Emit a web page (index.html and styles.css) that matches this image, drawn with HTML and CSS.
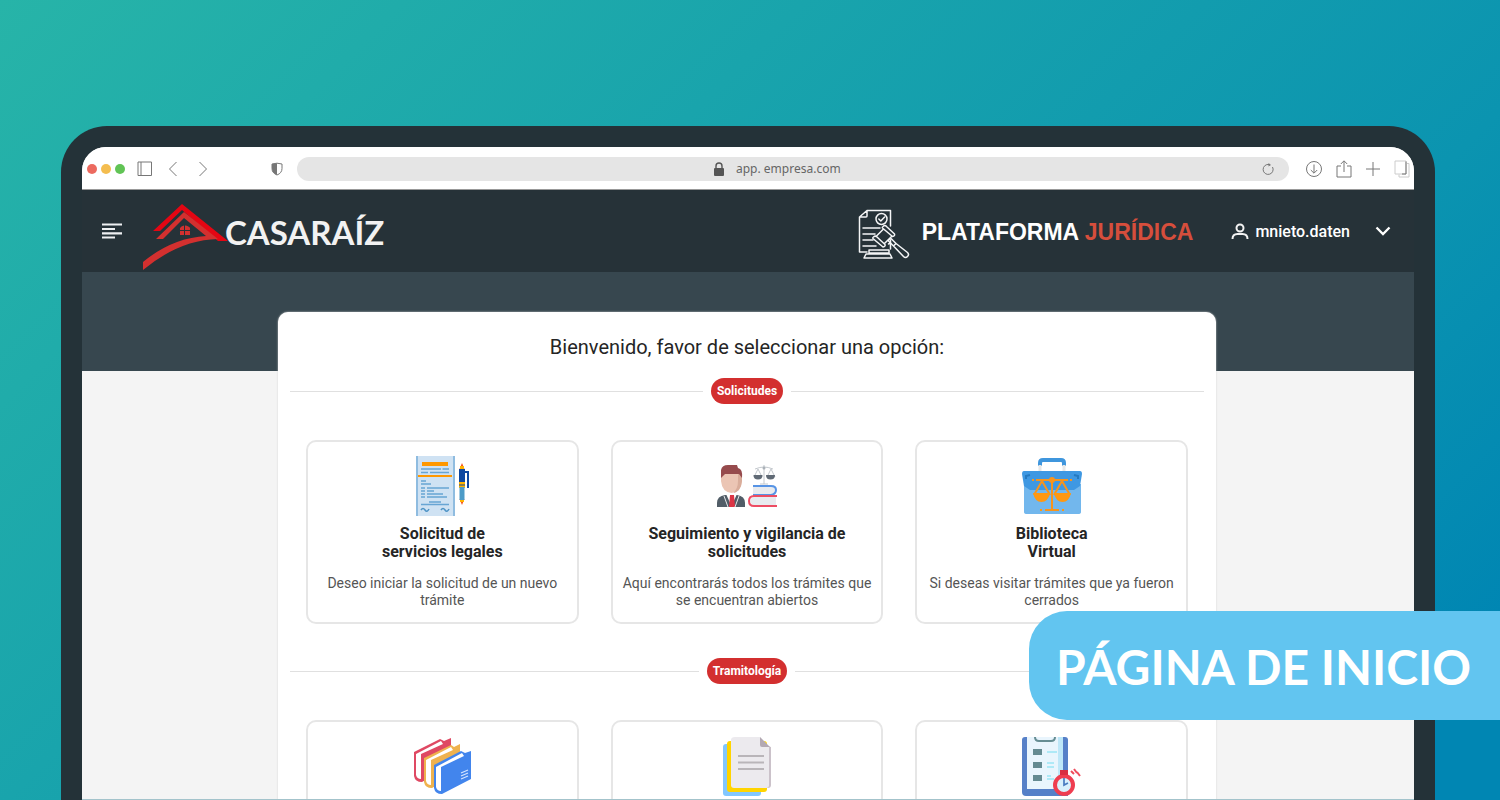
FILE: index.html
```html
<!DOCTYPE html>
<html lang="es">
<head>
<meta charset="utf-8">
<meta name="viewport" content="width=device-width, initial-scale=1">
<title>Plataforma Jurídica</title>
<link rel="stylesheet" href="styles.css">
</head>
<body>
<div class="device">
  <div class="screen">
    <div class="toolbar">
      <div class="dots"><i class="dot red"></i><i class="dot yellow"></i><i class="dot green"></i></div>
      <button class="tool sidebar" aria-label="Barra lateral"><svg width="16" height="16" viewBox="0 0 16 16"><path d="M1 1h13.500v13.500H1zM4 1v13.500"/></svg></button>
      <button class="tool back" aria-label="Atrás"><svg width="10" height="16" viewBox="0 0 10 16"><path d="M8.500 1L1.500 8l7 7"/></svg></button>
      <button class="tool forward" aria-label="Adelante"><svg width="10" height="16" viewBox="0 0 10 16"><path d="M1.500 1l7 7-7 7"/></svg></button>
      <button class="tool shield" aria-label="Privacidad"><svg width="12" height="14" viewBox="0 0 12 14"><path d="M6 1.200L11 2v4.500Q11 11 6 13 1 11 1 6.500V2z"/><path class="solid" d="M6 1.200V13Q1 11 1 6.500V2z"/></svg></button>
      <div class="address">
        <svg class="lock" width="10" height="14" viewBox="0 0 10 14"><rect y="6" width="10" height="8" rx="1" fill="#555"/><path d="M2 6.500V4a3 3 0 0 1 6 0v2.500" fill="none" stroke="#555" stroke-width="1.400"/></svg>
        <input class="url" type="text" value="app. empresa.com" aria-label="Dirección">
        <button class="tool reload" aria-label="Recargar"><svg width="14" height="14" viewBox="0 0 14 14"><path d="M8 2.500A5 5 0 1 0 11.500 5"/><path class="solid" d="M7.500 1l2.500 2-2.500 1.500z"/></svg></button>
      </div>
      <div class="actions">
        <button class="tool" aria-label="Descargas"><svg width="18" height="18" viewBox="0 0 18 18"><circle cx="9" cy="9" r="7.500"/><path d="M9 4.500v8.500M5.800 10L9 13.200l3.200-3.200"/></svg></button>
        <button class="tool" aria-label="Compartir"><svg width="16" height="20" viewBox="0 0 16 20"><path d="M5 7H1v11h14V7h-4M8 13V2M4.800 5L8 1.800 11.200 5"/></svg></button>
        <button class="tool" aria-label="Nueva pestaña"><svg width="16" height="16" viewBox="0 0 16 16"><path d="M1 8h14M8 1v14"/></svg></button>
        <button class="tool" aria-label="Pestañas"><svg width="16" height="18" viewBox="0 0 16 18"><path class="faint" d="M1 1h11v13H1zM13 3.500h2V17H5v-2.500"/><path d="M12 1.500V14H8"/></svg></button>
      </div>
    </div>

    <header class="header">
      <button class="menu" aria-label="Menú"><svg width="20" height="16" viewBox="0 0 20 16"><path d="M0 1.500h20M0 6h13M0 10.300h20M0 14.500h13" stroke="#eef0f2" stroke-width="2.200"/></svg></button>
      <a class="brand" href="#">
        <svg width="86" height="66" viewBox="0 0 86 66">
          <path fill="#e30613" d="M10 27L39 0 85 37H75L39 6 17 27z"/>
          <path fill="#d3302f" d="M13 35L41 8 75 35Q36 36 0 66V58Q29 34 63 32L41 14 20 35z"/>
          <path fill="#d3302f" d="M37 26v-2q1-2 4-2.500V26zm5-4.500q4 .5 5 2.500v2h-5zM37 27h4v4h-4zm5 0h5v4h-5z"/>
        </svg>
        <span class="brand-name">CASARAÍZ</span>
      </a>
      <div class="platform">
        <svg width="52" height="50" viewBox="0 0 52 50" fill="none" stroke="#f4f5f6" stroke-width="1.500" stroke-linejoin="round" stroke-linecap="round">
          <path d="M9 43H1.500V8L9 1.500h23.500V17M1.500 8H8q1 0 1-1V1.500M5 19h17M5 25h12M5 31h10M5 37h13M32.500 31v9"/>
          <circle cx="23.500" cy="10" r="5.500"/><path d="M20.800 10l2 2 3.800-4"/>
          <path d="M25 17.500q2-2 3.500 0l8 7.500q.7 2-2 2.500l-9.500-8q-1.500-1 0-2zM15.500 28q2-2 3.500 0l8 7.500q.7 2-2 2.500l-9.500-8q-1.500-1 0-2zM25.500 20L18 27.500M34 27l-7.500 7.500"/>
          <path d="M30 31.500l3-2 5 5-2.500 2.500zM38 34.500l11.500 9q2 2 0 4t-4 0L35.500 37M32.500 34l-2 1"/>
          <path d="M11 41h20v3H11zM8 45h24l2 4H6z"/>
        </svg>
        <strong class="platform-name">PLATAFORMA <span>JURÍDICA</span></strong>
      </div>
      <button class="user">
        <svg width="18" height="17" viewBox="0 0 18 17" fill="none" stroke="#f2f2f2" stroke-width="2"><circle cx="9" cy="5" r="3.500"/><path d="M1.500 16q0-5 5-5h5q5 0 5 5"/></svg>
        <span>mnieto.daten</span>
        <svg class="caret" width="16" height="10" viewBox="0 0 16 10"><path d="M1.500 1.500L8 8l6.500-6.500" fill="none" stroke="#fff" stroke-width="2.300"/></svg>
      </button>
    </header>

    <main class="content">
      <section class="panel">
        <h1>Bienvenido, favor de seleccionar una opción:</h1>
        <h2 class="divider"><span>Solicitudes</span></h2>
        <div class="cards">
          <a class="card" href="#">
            <svg width="60" height="60" viewBox="0 0 60 60">
              <path fill="#cfe2f3" d="M4 0h39v60H4z"/><path stroke="#8fbce0" stroke-width="2" d="M5 0v60M42 0v60"/>
              <path fill="#ff9800" d="M10 6h26v4H10zM6 19h34v2H6z"/>
              <path stroke="#67a5d4" stroke-width="1.700" d="M9 13h20m1.500 0H37M9 16.500h7m2 0h19M9 25h5M9 28h10M9 32h4m2 0h22M9 35h4m2 0h7M9 38h4m2 0h16M9 41h4m2 0h20M17 46h12M9 48.500h28"/>
              <path fill="none" stroke="#4f94c6" stroke-width="1.500" d="M9 54q2-3 4 0t4-1M29 54q2-3 4 0t4-1"/>
              <path fill="#f4511e" d="M50 7l2.500 6h-5zM47.500 43h5L50 49z"/><path fill="#ffb300" d="M48 10h4v4h-4zM47 26h6v6h-6zM48 43h4v3h-4z"/><path fill="#0d47a1" d="M47 13h6v2h4v17h-2V17h-2v9h-6zM47 28.500h6v1h-6z"/><path fill="#4d9bc7" d="M47.500 31h5v13h-5z"/>
            </svg>
            <h3>Solicitud de<br>servicios legales</h3>
            <p>Deseo iniciar la solicitud de un nuevo trámite</p>
          </a>
          <a class="card" href="#">
            <svg width="60" height="60" viewBox="0 0 60 60">
              <path fill="#515d67" d="M0 51v-4q0-7 8-8h12q8 1 8 8v4z"/><path fill="#fff" d="M9 38h11l-5.500 12z"/><path fill="#dc3545" d="M13 39h4l1 12h-6z"/><path stroke="#e9eaec" d="M7 40l4 11M22 40l-4 11"/>
              <path fill="#ebc5b4" d="M4 18h21v7q-1 11-10.500 12Q5 36 4 25z"/><path fill="#d9ad9b" d="M21 18h4v7q-1 11-9 12 5-4 5-12z"/><path fill="#964b4d" d="M4 22v-8q1-5 7-5h9l1 3q5 1 4 10l-3-4H8z"/>
              <path fill="none" stroke="#c3c8cd" d="M47 9v19M38 13q5-2 9-2t9 2M41 13l-4 8M41 13l4 8M54 13l-4 8M54 13l4 8M43 28h8"/><circle cx="47" cy="12" r="1.500" fill="#aab1b8"/><path fill="#606a75" d="M36.500 19h9q0 4.500-4.500 4.500t-4.500-4.500zM49 19h9q0 4.500-4.500 4.500T49 19z"/>
              <path fill="#e8ebef" d="M36 31h21q3 4 0 7H36zM36 41h23v8H36q-6-4 0-8z"/><path fill="none" stroke="#5794e5" stroke-width="2" d="M36 30h18q5 0 5 4t-5 5H36"/><path fill="none" stroke="#ed4d63" stroke-width="2" d="M60 40H37q-5 0-5 5t5 5h23"/>
            </svg>
            <h3>Seguimiento y vigilancia de<br>solicitudes</h3>
            <p>Aquí encontrarás todos los trámites que se encuentran abiertos</p>
          </a>
          <a class="card" href="#">
            <svg width="60" height="60" viewBox="0 0 60 60">
              <path fill="none" stroke="#3f96dd" stroke-width="4" d="M18 10V7q0-3 3-3h18q3 0 3 3v3"/><path stroke="#e6e7e8" stroke-width="3" d="M18 9v6M42 9v6"/>
              <path fill="#72b7ed" d="M2 28h57v28q0 2-3 2H5q-3 0-3-2z"/><path fill="#3f98e2" d="M2 15h56q2 0 2 3l-2 12-6 4H8l-6-4-2-12q0-3 2-3z"/><path fill="none" stroke="#257ac1" stroke-width="2" d="M4 23v-3l4-1M56 23v-3l-4-1"/>
              <path fill="none" stroke="#f7941d" stroke-width="2" d="M10 24h2m2 0h32m2 0h2M30 23v31M23 54h14M20 25l-8 14M20 25l8 14M40 25l-8 14M40 25l8 14"/><circle cx="30" cy="24" r="3" fill="#f7941d"/><path fill="#ff9811" d="M11 37h17q-2 9-8.500 9T11 37zM32 37h17q-2 9-8.500 9T32 37zM18 53h2v2h-2zM40 53h2v2h-2z"/>
            </svg>
            <h3>Biblioteca<br>Virtual</h3>
            <p>Si deseas visitar trámites que ya fueron cerrados</p>
          </a>
        </div>
        <h2 class="divider"><span>Tramitología</span></h2>
        <div class="cards">
          <a class="card" href="#" aria-label="Expedientes">
            <svg width="60" height="60" viewBox="0 0 60 60">
              <path fill="#df4963" d="M2 16L28 3l4 2 7-3v27L10 46q-7 0-8-6z"/><path fill="#fff" d="M4 18L29 5l2 3L9 18v25q-4 0-5-4z"/>
              <path fill="#efb24e" d="M12 22L39 9l3 2 6-3v28L20 52q-7 0-8-6z"/><path fill="#fff" d="M14 24L39 11l2 3-22 10v25q-4 0-5-4z"/>
              <path fill="#4285ed" d="M22 29L49 15l4 2 6-2v28L30 58q-7 0-8-6z"/><path fill="#fff" d="M24 31L50 17l2 3-23 11v24q-4 0-5-4z"/><path stroke="#d4e4ff" stroke-width="1.200" d="M49 37l7-3M49 40l7-3M49 43l7-3"/>
            </svg>
          </a>
          <a class="card" href="#" aria-label="Documentos">
            <svg width="60" height="60" viewBox="0 0 60 60">
              <rect x="6" y="8" width="38" height="52" rx="3" fill="#82c7ff"/><rect x="10" y="5" width="40" height="51" rx="3" fill="#ffd400"/><path fill="#cbc2ca" d="M47 9l7 2v38q0 3-3 3h-4z"/><path fill="#eceaee" d="M18 1h25l9 10v38q0 3-3 3H17q-3 0-3-3V4q0-3 4-3z"/><path fill="#b3a9b3" d="M43 1l10 10H45q-2 0-2-2z"/><path stroke="#b9b5b9" stroke-width="2.200" d="M21 20h26M21 26.500h26M21 33h26"/>
            </svg>
          </a>
          <a class="card" href="#" aria-label="Plazos">
            <svg width="60" height="60" viewBox="0 0 60 60">
              <path fill="#5680c8" d="M3 1h40q3 0 3 3v56H4q-4 0-4-4V4q0-3 3-3z"/><path fill="#e9f5fd" d="M5 1h36v52H5z"/><path fill="#bee7f8" d="M36 1h5v52h-5z"/><path fill="none" stroke="#668d93" stroke-width="2" d="M13 1q0 4 4 4h12q4 0 4-4"/><path fill="#648a91" d="M11 13h9v6h-9zM11 26h9v6h-9zM11 39h9v6h-9z"/><path stroke="#9ae5f5" stroke-width="1.700" d="M25 16h10M25 27h7M25 31h7M25 40h4M25 43h7"/>
              <circle cx="42" cy="49" r="9" fill="#d9f0fc" stroke="#ef3d50" stroke-width="4"/><path fill="#d92d41" d="M38 34h8v5h-8z"/><path fill="none" stroke="#487bc0" stroke-width="1.700" d="M42 42v7l4-2"/><path stroke="#ef4c5c" stroke-width="2" d="M49 35l3 3M52 33l3 4M55 36l3 4"/>
            </svg>
          </a>
        </div>
      </section>
    </main>
  </div>
</div>
<div class="banner">PÁGINA DE INICIO</div>
</body>
</html>
```
FILE: styles.css
```css
* { box-sizing: border-box; }
body {
  margin: 0;
  height: 100vh;
  padding: 126px 65px 0 61px;
  display: flex;
  overflow: hidden;
  position: relative;
  background: linear-gradient(135deg, #27b4a8, #0b94b0 70%, #0086b3 92%);
  font-family: Roboto, "Liberation Sans", sans-serif;
  color: #252525;
}
a { color: inherit; text-decoration: none; }
button { border: 0; padding: 0; background: none; font: inherit; color: inherit; display: flex; align-items: center; }
svg { display: block; flex-shrink: 0; }
h1, h2, h3, p { margin: 0; }
.device {
  flex: 1;
  min-width: 0;
  display: flex;
  padding: 21px 21px 0;
  background: #243238;
  border-radius: 46px 46px 0 0;
}
.screen {
  flex: 1;
  min-width: 0;
  overflow: hidden;
  border-radius: 24px 24px 0 0;
  background: #f4f4f4;
  border-bottom: 1px solid #a3c3cb;
}
.toolbar {
  height: 43px;
  display: flex;
  align-items: center;
  padding: 1px 4px 0 5px;
  background: #fff;
  border-bottom: 1px solid #999;
}
.dots { display: flex; gap: 4px; margin-right: 12px; }
.dot { width: 10px; height: 10px; border-radius: 50%; }
.red { background: #ec6a5f; }
.yellow { background: #f4bd4f; }
.green { background: #61c455; }
.tool svg { fill: none; stroke: #777; stroke-width: 1; }
.tool .solid { fill: #777; stroke: none; }
.tool .faint { stroke: #ccc; }
.sidebar { margin-right: 15px; }
.back { margin-right: 20px; }
.forward { margin-right: 63px; }
.shield { margin-right: 14px; }
.address {
  flex: 1;
  height: 24px;
  display: flex;
  align-items: center;
  border-radius: 12px;
  background: #e5e5e5;
  padding-right: 14px;
}
.lock { margin-left: auto; }
.url {
  width: 108px;
  margin-left: 12px;
  padding: 0;
  border: 0;
  background: none;
  font: 12px/16px "Noto Sans", sans-serif;
  color: #666;
}
.reload { margin-left: auto; }
.actions { display: flex; align-items: center; gap: 13px; margin-left: 16px; }
.header {
  height: 82px;
  display: flex;
  align-items: center;
  padding: 0 23px 0 20px;
  background: #263238;
  color: #fff;
}
.menu { margin-right: 21px; }
.brand { display: flex; align-items: flex-start; padding-top: 12px; }
.brand-name { font: 700 33px/36px Lato, sans-serif; color: #f2f2f2; margin: 10px 0 0 -4px; }
.platform { display: flex; align-items: center; gap: 12px; margin-left: auto; padding-top: 6px; }
.platform-name { padding-bottom: 4px; font: 700 23px/28px "Liberation Sans", sans-serif; }
.platform-name span { color: #d64e3c; }
.user { margin-left: 38px; gap: 6px; font-size: 16px; font-weight: 500; }
.caret { margin-left: 19px; }
.content {
  padding: 40px 17px 0 15px;
  background: linear-gradient(#37474f 99px, #f4f4f4 99px);
}
.panel {
  max-width: 938px;
  margin: 0 auto;
  padding: 23px 12px 30px;
  background: #fff;
  border-radius: 10px 10px 0 0;
  box-shadow: 0 0 2px #ccc;
}
.panel h1 { font-size: 20px; line-height: 24px; font-weight: 400; text-align: center; }
.divider { display: flex; align-items: center; gap: 8px; margin-top: 19px; }
.divider::before, .divider::after { content: ""; flex: 1; height: 1px; background: #e0e0e0; }
.divider span {
  padding: 0 6px;
  border-radius: 13px;
  background: #d32f2f;
  color: #fff;
  font-size: 12px;
  line-height: 26px;
  font-weight: 700;
}
.cards { display: grid; grid-template-columns: repeat(3, 1fr); gap: 32px; padding: 36px 16px 15px; }
.card {
  min-height: 184px;
  padding: 14px 10px 0;
  border: 2px solid #e6e6e6;
  border-radius: 10px;
  text-align: center;
}
.card svg { margin: 0 auto; }
.card h3 { margin-top: 9px; font-size: 16px; line-height: 18px; font-weight: 700; }
.card p { margin-top: 14px; font-size: 14px; line-height: 17px; color: #555; }
.banner {
  position: absolute;
  right: 0;
  bottom: 80px;
  padding: 2px 29px 0 27px;
  border-radius: 38px 0 0 38px;
  background: #62c5f0;
  color: #fff;
  font: 700 48px/107px Lato, sans-serif;
}
```
